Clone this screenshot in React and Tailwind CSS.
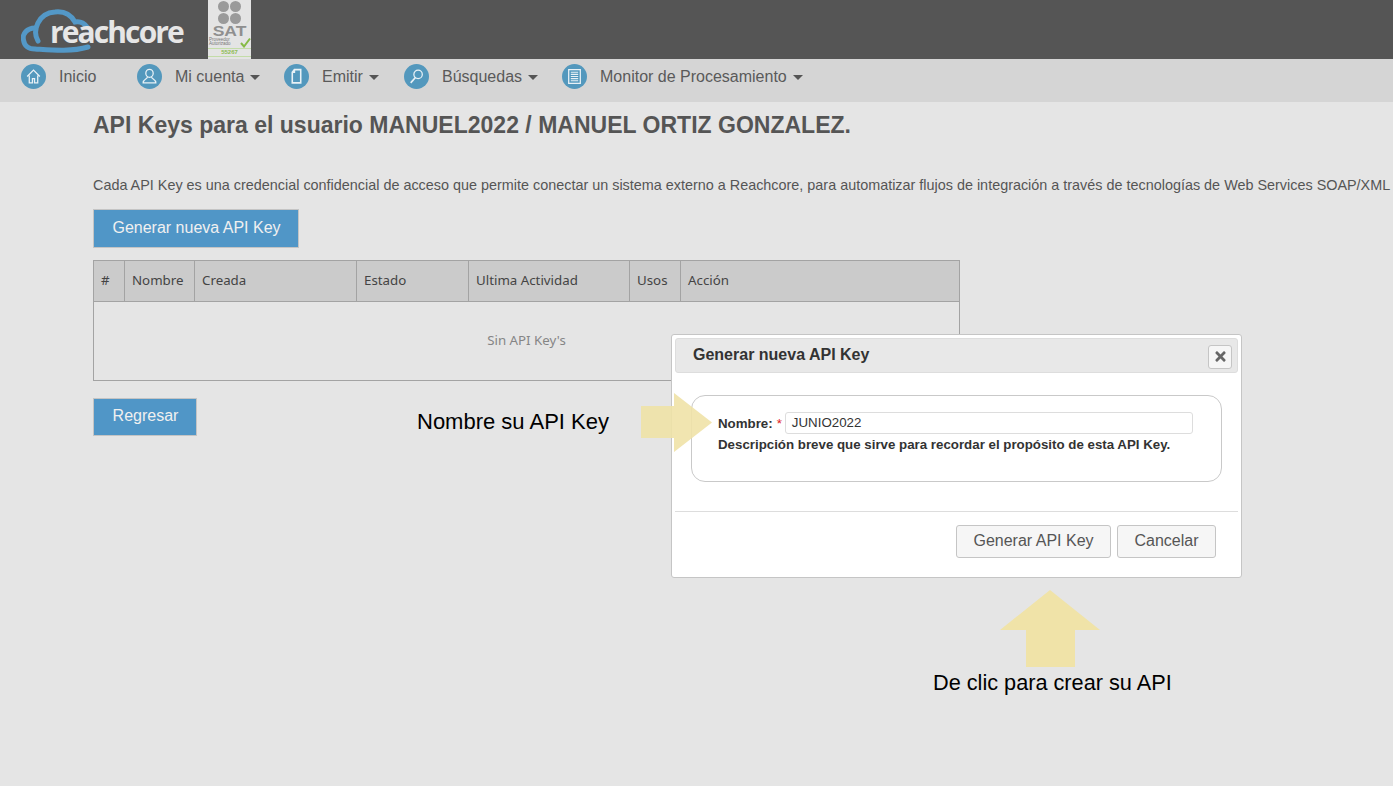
import { FaTimes } from "react-icons/fa";

function NavIcon({ children }) {
  return (
    <span className="flex h-[25px] w-[25px] shrink-0 items-center justify-center rounded-full bg-[#5398bd] text-[#e8f1f6]">
      <svg width="19" height="19" viewBox="0 0 18 18" fill="none" stroke="currentColor" strokeWidth="1.2">
        {children}
      </svg>
    </span>
  );
}

function Caret() {
  return <span className="ml-[6px] mt-[2px] inline-block h-0 w-0 border-x-[5px] border-t-[5px] border-x-transparent border-t-[#555]" />;
}

function NavItem({ icon, label, caret, className }) {
  return (
    <div className={"flex items-center " + className}>
      <NavIcon>{icon}</NavIcon>
      <span className="ml-[13px] mt-[1px] whitespace-nowrap">{label}</span>
      {caret && <Caret />}
    </div>
  );
}

const headers = [
  ["#", "w-[31px]"],
  ["Nombre", "w-[70px]"],
  ["Creada", "w-[162px]"],
  ["Estado", "w-[112px]"],
  ["Ultima Actividad", "w-[161px]"],
  ["Usos", "w-[51px]"],
  ["Acción", "flex-1"],
];

export default function App() {
  return (
    <div className="relative h-[786px] w-[1393px] overflow-hidden bg-[#e5e5e5] font-['Liberation_Sans',Arial,sans-serif] text-[#555]">
      {/* top bar */}
      <header className="flex h-[59px] bg-[#555555] pl-[21px]">
        <div className="flex w-[163px] items-center">
          <svg width="70" height="44" viewBox="0 0 70 44" fill="none" className="-mr-[41px] mt-[2px] shrink-0">
            <path d="M17 32 C11 22 17 4 34 3 C43 2 50 6 54 13 C59 12 63 14 66 18" stroke="#5398c7" strokeWidth="5" strokeLinecap="round" />
            <path d="M14 19 C6 19 1 25 2.500 31 C3.500 38 8 40 14 40 C30 41 50 43 67 38" stroke="#5398c7" strokeWidth="5" strokeLinecap="round" />
          </svg>
          <span className="relative mt-[4px] font-['Open_Sans',sans-serif] text-[30px] font-bold leading-none tracking-[-1.9px] text-[#e6e6e6]">reachcore</span>
        </div>
        <div className="ml-[24px] flex h-[59px] w-[43px] flex-col items-center overflow-hidden bg-[#e4e4e4]">
          <div className="mt-[1px] grid grid-cols-2 gap-[1px]">
            <span className="h-[11px] w-[11px] rounded-full bg-[#9a9a9a]" />
            <span className="h-[11px] w-[11px] rounded-full bg-[#9a9a9a]" />
            <span className="h-[11px] w-[11px] rounded-full bg-[#9a9a9a]" />
            <span className="h-[11px] w-[11px] rounded-full bg-[#9a9a9a]" />
          </div>
          <span className="mt-[2px] scale-x-125 text-[14px] font-bold leading-[11px] text-[#8f8f8f]">SAT</span>
          <div className="flex h-[10px] w-full items-center pl-[1px]">
            <span className="w-[31px] text-[4.5px] leading-[4.5px] text-[#777]">Proveedor Autorizado</span>
            <svg width="11" height="11" viewBox="0 0 11 11" fill="none">
              <path d="M1 6 L4 9.5 L10 1.5" stroke="#86bb45" strokeWidth="2" />
            </svg>
          </div>
          <span className="mt-[1px] w-full border-y border-[#c3dca8] text-center text-[6px] font-bold leading-[7px] text-[#8dbb52]">55267</span>
        </div>
      </header>

      {/* nav */}
      <nav className="flex h-[43px] items-center bg-[#d5d5d5] pb-[9px] pl-[21px] text-[16px] text-[#5a5a5a]">
        <NavItem
          className="w-[116px]"
          label="Inicio"
          icon={<path d="M3 9 L9 3 L15 9 M5 8 V15 H8 V11 H10 V15 H13 V8" />}
        />
        <NavItem
          className="w-[147px]"
          label="Mi cuenta"
          caret
          icon={<><ellipse cx="9" cy="6" rx="3.5" ry="3.8" /><path d="M7 9.5 C7 11.5 3 11.5 3 15 H15 C15 11.5 11 11.5 11 9.5" /></>}
        />
        <NavItem
          className="w-[120px]"
          label="Emitir"
          caret
          icon={<path d="M7 2.5 H13 V15 H5 V5 Z M7 2.5 V5 H5" strokeWidth="1.5" />}
        />
        <NavItem
          className="w-[158px]"
          label="Búsquedas"
          caret
          icon={<><circle cx="10.5" cy="7" r="4" /><path d="M8 10 L3.5 15" strokeWidth="1.6" /></>}
        />
        <NavItem
          label="Monitor de Procesamiento"
          caret
          icon={<><rect x="3.5" y="2.5" width="11" height="13" /><path d="M5.5 5 H12.5 M5.5 7 H12.5 M5.5 9 H12.5 M5.5 11 H12.5 M5.5 13 H12.5" strokeWidth="1" /></>}
        />
      </nav>

      {/* content */}
      <main className="pl-[93px]">
        <h1 className="mt-[10px] whitespace-nowrap text-[23.03px] font-bold leading-[27px] text-[#555]">
          API Keys para el usuario MANUEL2022 / MANUEL ORTIZ GONZALEZ.
        </h1>
        <p className="mt-[36px] whitespace-nowrap text-[14.4px] leading-[20px] text-[#555]">
          Cada API Key es una credencial confidencial de acceso que permite conectar un sistema externo a Reachcore, para automatizar flujos de integración a través de tecnologías de Web Services SOAP/XML
        </p>
        <button className="mt-[14px] block h-[39px] w-[206px] border border-[#c4c4c4] bg-[#5096c7] pb-[2px] pl-[1px] text-center text-[16px] text-[#f0f0f0]">
          Generar nueva API Key
        </button>
        <div className="mt-[12px] w-[867px] border border-[#a3a3a3] font-['Noto_Sans',sans-serif] text-[13.3px]">
          <div className="flex h-[41px] border-b border-[#a3a3a3] bg-[#cbcbcb] text-[#444]">
            {headers.map(([name, width]) => (
              <div key={name} className={"flex items-center border-r border-[#a3a3a3] pl-[7px] last:border-r-0 " + width}>
                {name}
              </div>
            ))}
          </div>
          <div className="flex h-[78px] items-center justify-center text-[#858585]">Sin API Key's</div>
        </div>
        <button className="mt-[17px] block h-[38px] w-[104px] border border-[#c4c4c4] bg-[#5096c7] pb-[2px] pl-[1px] text-[16px] text-[#f0f0f0]">
          Regresar
        </button>
      </main>

      {/* dialog */}
      <div className="absolute left-[671px] top-[334px] h-[244px] w-[571px] rounded-[3px] border border-[#c5c5c5] bg-white p-[3px]">
        <div className="flex h-[35px] items-center justify-between rounded-[3px] border border-[#dddddd] bg-[#e8e8e8] pl-[17px] pr-[5px]">
          <span className="-mt-[1px] text-[16px] font-bold text-[#333]">Generar nueva API Key</span>
          <button className="mt-[2px] flex h-[24px] w-[24px] items-center justify-center rounded-[3px] border border-[#c5c5c5] bg-[#f6f6f6] text-[#666]">
            <FaTimes size={15} />
          </button>
        </div>
        <div className="ml-[16px] mt-[22px] h-[87px] w-[531px] rounded-[14px] border border-[#c9c9c9] pl-[26px] pt-[16px] text-[13.3px] font-bold text-[#333]">
          <div className="flex h-[22px] items-center">
            <span className="mt-[2px]">Nombre:</span>
            <span className="ml-[4px] mt-[1px] font-normal text-[#e02020]">*</span>
            <div className="ml-[3px] flex h-[22px] w-[408px] items-center rounded-[3px] border border-[#dddddd] bg-white pl-[6px] font-normal text-[#333]">
              JUNIO2022
            </div>
          </div>
          <p className="mt-[2px] whitespace-nowrap leading-[18px]">Descripción breve que sirve para recordar el propósito de esta API Key.</p>
        </div>
        <div className="mt-[29px] flex justify-end gap-[6px] border-t border-[#dddddd] pr-[22px] pt-[13px]">
          <button className="h-[33px] w-[155px] rounded-[3px] border border-[#c5c5c5] bg-[#f6f6f6] pb-[2px] text-[16px] text-[#555]">Generar API Key</button>
          <button className="h-[33px] w-[99px] rounded-[3px] border border-[#c5c5c5] bg-[#f6f6f6] pb-[2px] text-[16px] text-[#555]">Cancelar</button>
        </div>
      </div>

      {/* annotations */}
      <svg width="72" height="60" viewBox="0 0 72 60" className="absolute left-[641px] top-[393px] opacity-90">
        <path d="M0 13 H33 V0 L71 29.5 L33 59 V45 H0 Z" fill="#f0e3a8" />
      </svg>
      <span className="absolute left-[417px] top-[409px] text-[22px] leading-[26px] text-black">Nombre su API Key</span>
      <svg width="102" height="78" viewBox="0 0 102 78" className="absolute left-[999px] top-[590px]">
        <path d="M51 0 L101 40 H76 V77 H27 V40 H1 Z" fill="#f0e3a8" />
      </svg>
      <span className="absolute left-[933px] top-[670px] text-[21.7px] leading-[26px] text-black">De clic para crear su API</span>
    </div>
  );
}
